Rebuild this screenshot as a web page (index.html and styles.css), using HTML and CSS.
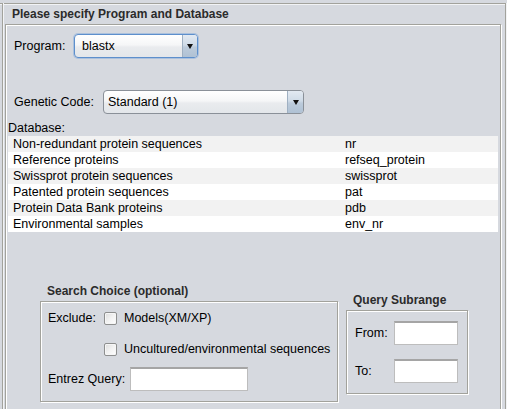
FILE: index.html
```html
<!DOCTYPE html>
<html>
<head>
<meta charset="utf-8">
<link rel="stylesheet" href="styles.css">
</head>
<body>
<div class="window">
  <div class="panel">
    <div class="panel-title">Please specify Program and Database</div>
    <div class="inner">
      <div class="row program-row">
        <span class="lbl program-lbl">Program:</span>
        <div class="combo combo-focus program-combo">
          <span class="combo-text">blastx</span>
          <span class="combo-btn"><span class="tri"></span></span>
        </div>
      </div>
      <div class="row genetic-row">
        <span class="lbl genetic-lbl">Genetic Code:</span>
        <div class="combo genetic-combo">
          <span class="combo-text">Standard (1)</span>
          <span class="combo-btn"><span class="tri"></span></span>
        </div>
      </div>
      <div class="db-label">Database:</div>
      <div class="table">
        <div class="tr"><span class="td">Non-redundant protein sequences</span><span class="td">nr</span></div>
        <div class="tr"><span class="td">Reference proteins</span><span class="td">refseq_protein</span></div>
        <div class="tr"><span class="td">Swissprot protein sequences</span><span class="td">swissprot</span></div>
        <div class="tr"><span class="td">Patented protein sequences</span><span class="td">pat</span></div>
        <div class="tr"><span class="td">Protein Data Bank proteins</span><span class="td">pdb</span></div>
        <div class="tr"><span class="td">Environmental samples</span><span class="td">env_nr</span></div>
      </div>
      <div class="groups">
        <div class="group">
          <div class="group-title">Search Choice (optional)</div>
          <div class="etched search-box">
            <div class="srow">
              <span class="slbl">Exclude:</span>
              <span class="check"></span>
              <span class="ctext">Models(XM/XP)</span>
            </div>
            <div class="srow srow2">
              <span class="slbl"></span>
              <span class="check"></span>
              <span class="ctext">Uncultured/environmental sequences</span>
            </div>
            <div class="srow srow3">
              <span class="elbl">Entrez Query:</span>
              <span class="field entrez-field"></span>
            </div>
          </div>
        </div>
        <div class="group">
          <div class="group-title">Query Subrange</div>
          <div class="etched range-box">
            <div class="rrow">
              <span class="rlbl">From:</span>
              <span class="field range-field"></span>
            </div>
            <div class="rrow rrow2">
              <span class="rlbl">To:</span>
              <span class="field range-field"></span>
            </div>
          </div>
        </div>
      </div>
    </div>
  </div>
</div>
</body>
</html>
```

FILE: styles.css
```css
html, body {
  margin: 0;
  padding: 0;
}
body {
  background: #d6d9df;
  font-family: "Liberation Sans", Arial, sans-serif;
  font-size: 12.5px;
  color: #000;
  width: 507px;
  height: 409px;
  overflow: hidden;
}
.window {
  height: 409px;
  padding-top: 3px;
  box-sizing: border-box;
  overflow: hidden;
  background: linear-gradient(#a2a29c, #a2a29c) 0 3px / 100% 1px no-repeat,
              linear-gradient(#f2f3f5, #f2f3f5) 0 4px / 100% 1px no-repeat,
              #d6d9df;
}
.panel {
  margin-left: 2px;
  width: 504px;
  height: 430px;
  box-sizing: border-box;
  border-left: 1px solid #a2a29c;
  border-right: 1px solid #a2a29c;
  box-shadow: inset 1px 0 0 #f2f3f5, 1px 0 0 #f2f3f5;
  padding: 1px 0 0 0;
}
.panel-title {
  padding: 2px 0 0 9px;
  font-weight: bold;
  font-size: 12px;
  line-height: 16px;
  color: #2b2b2b;
}
.inner {
  margin: 2px 0 0 2px;
  width: 496px;
  height: 420px;
  box-sizing: border-box;
  border: 1px solid #a2a29c;
  box-shadow: inset 1px 1px 0 #ffffff, 1px 1px 0 #ffffff;
}
.row {
  display: flex;
  align-items: center;
  height: 24px;
  margin-left: 8px;
}
.program-row { margin-top: 9px; }
.genetic-row { margin-top: 32px; }
.lbl {
  flex: none;
  line-height: 16px;
}
.program-lbl { width: 60px; }
.genetic-lbl { width: 89px; }

.combo {
  display: flex;
  height: 24px;
  box-sizing: border-box;
  border: 1px solid #8a9098;
  border-radius: 4px;
  background: linear-gradient(to bottom, #ffffff 0%, #f5f6f7 45%, #e9ebee 55%, #e3e6ea 100%);
  overflow: hidden;
}
.combo-focus {
  border-color: #5d8fcc;
  box-shadow: 0 0 0 1px rgba(120, 165, 220, 0.45);
}
.program-combo { width: 124px; }
.genetic-combo { width: 201px; }
.combo-text {
  flex: 1;
  line-height: 22px;
  white-space: nowrap;
}
.program-combo .combo-text { padding-left: 7px; }
.genetic-combo .combo-text { padding-left: 4px; }
.combo-btn {
  flex: none;
  width: 14px;
  border-left: 1px solid #9fb0c2;
  background: linear-gradient(to bottom, #e3eaf2 0%, #cfdbe7 45%, #bccbdb 55%, #afc1d4 100%);
  display: flex;
  align-items: center;
  justify-content: center;
}
.genetic-combo .combo-btn { width: 15px; }
.tri {
  width: 0;
  height: 0;
  border-left: 3.5px solid transparent;
  border-right: 3.5px solid transparent;
  border-top: 5px solid #111;
}

.db-label {
  margin: 6px 0 0 2px;
  line-height: 16px;
}
.table {
  margin-left: 2px;
  width: 490px;
}
.tr {
  display: grid;
  grid-template-columns: 332px 1fr;
  height: 16px;
  background: #ffffff;
}
.tr:nth-child(odd) {
  background: #f2f2f2;
}
.td {
  padding-left: 5px;
  padding-top: 1px;
  line-height: 15px;
  white-space: nowrap;
}

.groups {
  display: flex;
  align-items: center;
  gap: 8px;
  margin-left: 34px;
  margin-top: 51px;
}
.group-title {
  font-weight: bold;
  font-size: 12px;
  line-height: 16px;
  color: #2b2b2b;
  padding-left: 7px;
  margin-bottom: 2px;
}
.etched {
  border: 1px solid #a2a29c;
  box-shadow: inset 1px 1px 0 #ffffff, 1px 1px 0 #ffffff;
}
.search-box {
  width: 298px;
  box-sizing: border-box;
  padding: 6px 7px 10px 7px;
}
.srow {
  display: flex;
  align-items: center;
  height: 20px;
}
.srow2 { margin-top: 11px; }
.srow3 { margin-top: 8px; height: 24px; }
.slbl {
  flex: none;
  width: 56px;
}
.check {
  flex: none;
  width: 13px;
  height: 13px;
  box-sizing: border-box;
  border: 1px solid #8e8f8f;
  border-radius: 2px;
  background: linear-gradient(135deg, #dcdcdc 0%, #f2f2f2 50%, #ffffff 100%);
  box-shadow: inset 0 0 0 1px #f6f6f6;
}
.ctext {
  margin-left: 7px;
  white-space: nowrap;
}
.elbl {
  flex: none;
  width: 82px;
}
.field {
  flex: none;
  height: 24px;
  box-sizing: border-box;
  background: #fff;
  border: 1px solid #bdbdbd;
  border-top: 2px solid #a5a5a5;
}
.entrez-field { width: 118px; }

.range-box {
  width: 122px;
  box-sizing: border-box;
  padding: 10px 0 10px 8px;
}
.rrow {
  display: flex;
  align-items: center;
  height: 24px;
}
.rrow2 { margin-top: 14px; }
.rlbl {
  flex: none;
  width: 39px;
}
.range-field { width: 64px; }
```
